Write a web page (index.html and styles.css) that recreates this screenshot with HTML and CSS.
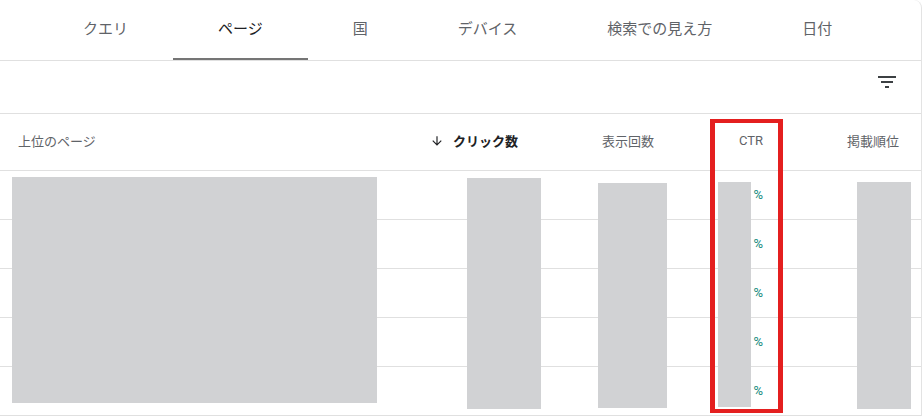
FILE: index.html
```html
<!doctype html>
<html>

<head>
    <meta charset="utf-8">
    <title>Search Console - ページ</title>
    <meta name="viewport" content="width=device-width,initial-scale=1">
    <link rel="stylesheet" href="styles.css">
</head>

<body>
    <div class="card">
        <div class="tabs">
            <div class="tab">クエリ</div>
            <div class="tab active">ページ</div>
            <div class="tab">国</div>
            <div class="tab">デバイス</div>
            <div class="tab">検索での見え方</div>
            <div class="tab">日付</div>
        </div>

        <div class="toolbar">
            <!-- filter_list icon -->
            <svg class="icon-filter" viewBox="0 0 24 24" aria-hidden="true">
                <path d="M10 18h4v-2h-4v2zM3 6v2h18V6H3zm3 7h12v-2H6v2z" />
            </svg>
        </div>

        <div class="table">
            <div class="row head">
                <div class="cell first">上位のページ</div>
                <div class="cell num sorted">
                    <svg class="icon-arrow" viewBox="0 0 24 24" aria-hidden="true">
                        <path d="M20 12l-1.41-1.41L13 16.17V4h-2v12.17l-5.58-5.59L4 12l8 8 8-8z" />
                    </svg>
                    <span>クリック数</span>
                </div>
                <div class="cell num">表示回数</div>
                <div class="cell num">CTR</div>
                <div class="cell num">掲載順位</div>
            </div>
            <div class="row">
                <div class="cell first"></div>
                <div class="cell num"></div>
                <div class="cell num"></div>
                <div class="cell num ctr">%</div>
                <div class="cell num"></div>
            </div>
            <div class="row">
                <div class="cell first"></div>
                <div class="cell num"></div>
                <div class="cell num"></div>
                <div class="cell num ctr">%</div>
                <div class="cell num"></div>
            </div>
            <div class="row">
                <div class="cell first"></div>
                <div class="cell num"></div>
                <div class="cell num"></div>
                <div class="cell num ctr">%</div>
                <div class="cell num"></div>
            </div>
            <div class="row">
                <div class="cell first"></div>
                <div class="cell num"></div>
                <div class="cell num"></div>
                <div class="cell num ctr">%</div>
                <div class="cell num"></div>
            </div>
            <div class="row">
                <div class="cell first"></div>
                <div class="cell num"></div>
                <div class="cell num"></div>
                <div class="cell num ctr">%</div>
                <div class="cell num"></div>
            </div>
        </div>

        <!-- redaction blocks painted over the values -->
        <div class="redact r-page"></div>
        <div class="redact r-clicks"></div>
        <div class="redact r-impr"></div>
        <div class="redact r-ctr"></div>
        <div class="redact r-pos"></div>

        <!-- annotation box round the CTR column -->
        <div class="highlight"></div>
    </div>
</body>

</html>
```

FILE: styles.css
```css
body {
    margin: 0;
    font-family: Roboto, "Noto Sans CJK JP", sans-serif;
    background: #fff;
    color: #5f6368;
}

.card {
    position: relative;
    width: 921px;
    height: 416px;
    border-right: 1px solid #e3e3e3;
    border-top-right-radius: 8px;
    overflow: hidden;
    background: #fff;
}

/* Tabs */
.tabs {
    display: flex;
    height: 60px;
    padding-left: 38px;
    border-bottom: 1px solid #e0e0e0;
}

.tab {
    display: flex;
    align-items: center;
    box-sizing: border-box;
    height: 60px;
    padding: 0 45px 4px;
    border-bottom: 2px solid transparent;
    font-size: 15px;
    color: #5f6368;
}

.tab.active {
    color: #202124;
    border-bottom-color: #757575;
}

/* Toolbar */
.toolbar {
    display: flex;
    justify-content: flex-end;
    align-items: flex-start;
    height: 53px;
    box-sizing: border-box;
    padding: 9px 22px 0 0;
    border-bottom: 1px solid #e0e0e0;
}

.icon-filter {
    width: 24px;
    height: 24px;
    fill: #3c4043;
}

/* Table */
.row {
    display: grid;
    grid-template-columns: 1fr 120px 136px 109px 136px;
    padding-right: 22px;
    height: 48px;
    border-bottom: 1px solid #e0e0e0;
    font-size: 13px;
}

.row.head {
    box-sizing: border-box;
    height: 57px;
    padding-bottom: 3px;
}

.cell {
    display: flex;
    align-items: center;
}

.cell.first {
    padding-left: 18px;
}

.cell.num {
    justify-content: flex-end;
}

.cell.sorted {
    gap: 9px;
    color: #202124;
    font-weight: bold;
}

.icon-arrow {
    width: 14px;
    height: 14px;
    fill: #202124;
}

.cell.ctr {
    padding-bottom: 1px;
    color: #12897b;
}

/* Redactions */
.redact {
    position: absolute;
    background: #d1d2d4;
}

.r-page {
    left: 12px;
    top: 177px;
    width: 365px;
    height: 226px;
}

.r-clicks {
    left: 467px;
    top: 178px;
    width: 74px;
    height: 231px;
}

.r-impr {
    left: 598px;
    top: 183px;
    width: 69px;
    height: 225px;
}

.r-ctr {
    left: 718px;
    top: 182px;
    width: 33px;
    height: 225px;
}

.r-pos {
    left: 857px;
    top: 182px;
    width: 54px;
    height: 227px;
}

.highlight {
    position: absolute;
    left: 710px;
    top: 119px;
    width: 63px;
    height: 286px;
    border-style: solid;
    border-color: #e41f1f;
    border-width: 4px 5px;
}
```
